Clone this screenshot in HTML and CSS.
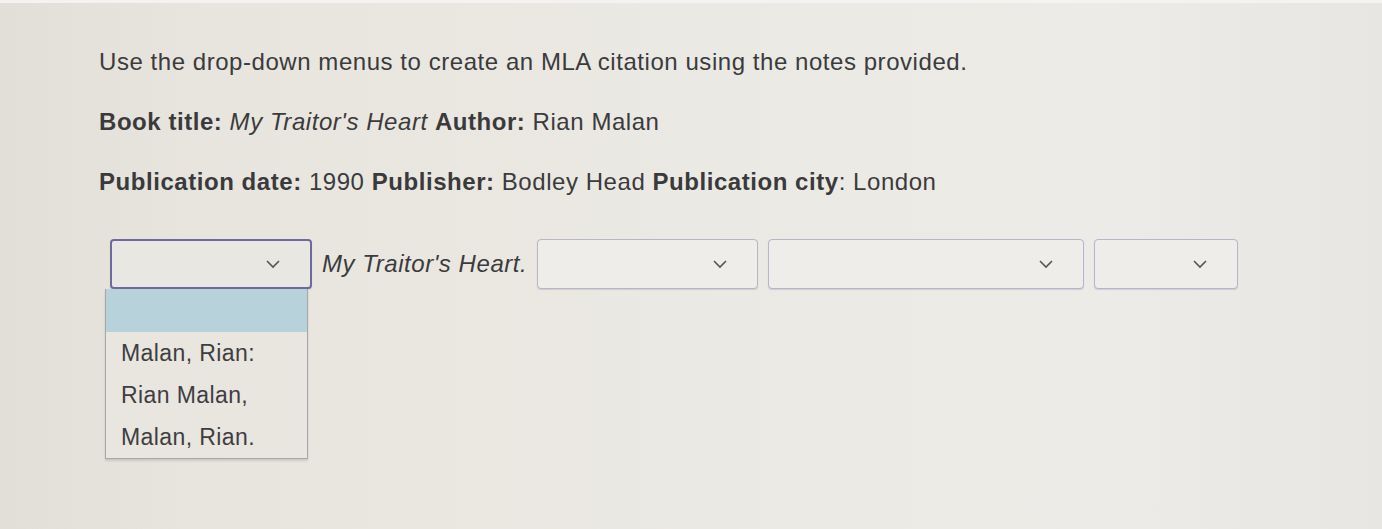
FILE: index.html
```html
<!DOCTYPE html>
<html>
<head>
<meta charset="utf-8">
<link rel="stylesheet" href="styles.css">
</head>
<body>
<div class="screen">
  <div class="content">
    <p class="line first">Use the drop-down menus to create an MLA citation using the notes provided.</p>
    <p class="line"><b>Book title:</b> <i>My Traitor's Heart</i> <b>Author:</b> Rian Malan</p>
    <p class="line"><b>Publication date:</b> 1990 <b>Publisher:</b> Bodley Head <b>Publication city</b>: London</p>
    <div class="row">
      <div class="select-wrap">
        <div class="select focused w1">
          <svg class="chev" width="16" height="10" viewBox="0 0 16 10"><path d="M2 2 L8 8 L14 2" fill="none" stroke="#555" stroke-width="1.6"/></svg>
        </div>
        <ul class="menu">
          <li class="opt sel"></li>
          <li class="opt">Malan, Rian:</li>
          <li class="opt">Rian Malan,</li>
          <li class="opt">Malan, Rian.</li>
        </ul>
      </div>
      <span class="title"><i>My Traitor's Heart.</i></span>
      <div class="select w2">
        <svg class="chev" width="16" height="10" viewBox="0 0 16 10"><path d="M2 2 L8 8 L14 2" fill="none" stroke="#555" stroke-width="1.6"/></svg>
      </div>
      <div class="select w3">
        <svg class="chev" width="16" height="10" viewBox="0 0 16 10"><path d="M2 2 L8 8 L14 2" fill="none" stroke="#555" stroke-width="1.6"/></svg>
      </div>
      <div class="select w4">
        <svg class="chev" width="16" height="10" viewBox="0 0 16 10"><path d="M2 2 L8 8 L14 2" fill="none" stroke="#555" stroke-width="1.6"/></svg>
      </div>
    </div>
  </div>
</div>
</body>
</html>
```
FILE: styles.css
```css
html, body {
  margin: 0;
  padding: 0;
}
body {
  width: 1382px;
  height: 529px;
  overflow: hidden;
  font-family: "Liberation Sans", Arial, sans-serif;
  color: #3b3b3d;
}
.screen {
  height: 529px;
  box-sizing: border-box;
  border-top: 3px solid #f4f3f1;
  background: linear-gradient(90deg, #e2dfd8 0%, #e8e5de 15%, #ebe9e3 50%, #ecebe7 80%, #e7e6e2 100%);
}
.content {
  padding: 0 0 0 99px;
}
.line {
  margin: 0;
  font-size: 24px;
  letter-spacing: 0.55px;
  line-height: 24px;
  height: 60px;
  white-space: nowrap;
}
.line.first {
  padding-top: 47px;
  height: 13px;
  margin-bottom: 47px;
}
.line b {
  font-weight: bold;
  color: #3a3a3c;
}
.row {
  display: flex;
  align-items: center;
  gap: 10px;
  margin-left: 11px;
  margin-top: 9px;
}
.select-wrap {
  position: relative;
}
.select {
  box-sizing: border-box;
  height: 50px;
  border: 1.5px solid #b6b5cb;
  border-radius: 4px;
  background: #eeedea;
  display: flex;
  align-items: center;
  justify-content: flex-end;
  padding-right: 29px;
  box-shadow: 0 1px 1px rgba(120, 120, 150, 0.25);
}
.select.focused {
  border: 2px solid #6d6a9c;
  background: #e9e7e1;
}
.w1 { width: 202px; }
.w2 { width: 221px; }
.w3 { width: 316px; }
.w4 { width: 144px; }
.chev {
  display: block;
}
.title {
  font-size: 24px;
  letter-spacing: 0.55px;
  color: #3b3b3d;
  white-space: nowrap;
}
.menu {
  position: absolute;
  left: -5px;
  top: 50px;
  width: 203px;
  margin: 0;
  padding: 0;
  list-style: none;
  box-sizing: border-box;
  border: 1.5px solid #a6a6ab;
  border-top: none;
  background: #e9e6df;
  box-shadow: 0 2px 2px rgba(0,0,0,0.12);
}
.opt {
  height: 42px;
  line-height: 42px;
  padding-left: 15px;
  font-size: 23px;
  letter-spacing: 0.4px;
  color: #3e3e42;
}
.opt.sel {
  height: 43px;
  background: #b7d2da;
}
```
